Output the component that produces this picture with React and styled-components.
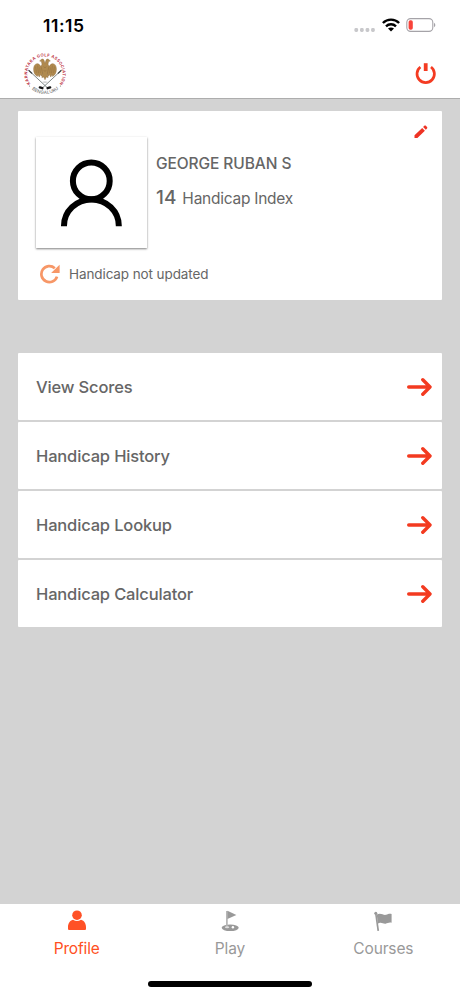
import React, { useState } from "react";
import styled, { createGlobalStyle } from "styled-components";

const GlobalStyle = createGlobalStyle`
  * { box-sizing: border-box; }
  body {
    margin: 0;
    background: #d3d3d3;
    font-family: Inter, "Liberation Sans", sans-serif;
  }
  svg { display: block; flex: none; }
`

const Screen = styled.div`
  width: 460px;
  height: 996px;
  display: flex;
  flex-direction: column;
  background: #d3d3d3;
  color: #666;
  overflow: hidden;
`

const StatusBar = styled.div`
  height: 50px;
  padding: 0 24px 0 43px;
  display: flex;
  align-items: center;
  justify-content: space-between;
  background: #fff;
`

const Clock = styled.div`
  color: #000;
  font-size: 17.5px;
  line-height: 20px;
  font-weight: 600;
  letter-spacing: 0.55px;
  padding-top: 2px;
`

const StatusIcons = styled.div`
  display: flex;
  align-items: center;
  gap: 6.5px;
`

const Header = styled.header`
  height: 49px;
  padding: 0 23px;
  display: flex;
  align-items: center;
  justify-content: space-between;
  background: #fff;
  border-bottom: 1px solid #adadad;
`

const IconButton = styled.button`
  display: flex;
  padding: 0;
  border: 0;
  background: none;
  cursor: pointer;
`

const Content = styled.main`
  flex: 1;
  padding: 12px 18px 0;
`

const ProfileCard = styled.section`
  height: 189px;
  padding: 26px 14px 0 18px;
  display: grid;
  grid-template-columns: 111px 1fr 14px;
  grid-template-rows: 111px 52px;
  column-gap: 9px;
  background: #fff;
  border-radius: 1px;
`

const Avatar = styled.div`
  display: flex;
  align-items: center;
  justify-content: center;
  background: #fff;
  box-shadow: 0 1px 2px rgba(0, 0, 0, 0.5);
`

const Details = styled.div`
  padding-top: 16px;
`

const Name = styled.div`
  font-size: 15.5px;
  line-height: 22px;
  font-weight: 500;
  letter-spacing: -0.08px;
`

const Handicap = styled.div`
  margin-top: 11px;
  display: flex;
  align-items: baseline;
  gap: 6px;
  font-size: 15.5px;
  line-height: 24px;
  letter-spacing: -0.25px;
`

const HandicapValue = styled.span`
  font-size: 19px;
  font-weight: 500;
  letter-spacing: 0;
`

const EditButton = styled(IconButton)`
  margin-top: -12px;
  align-self: start;
`

const UpdateNote = styled.div`
  grid-column: 1 / -1;
  display: flex;
  align-items: center;
  gap: 9px;
  padding-left: 3px;
  font-size: 13.5px;
  letter-spacing: -0.1px;
`

const Menu = styled.nav`
  margin-top: 53px;
  display: flex;
  flex-direction: column;
  gap: 2px;
`

const MenuRow = styled.a`
  height: 67px;
  padding: 0 10px 0 18px;
  display: flex;
  align-items: center;
  justify-content: space-between;
  background: #fff;
  border-radius: 1px;
  font-size: 16.5px;
  font-weight: 500;
  letter-spacing: -0.16px;
  cursor: pointer;
`

const TabBar = styled.nav`
  height: 92px;
  display: flex;
  flex-direction: column;
  align-items: center;
  justify-content: space-between;
  padding-bottom: 9px;
  background: #fff;
`

const Tabs = styled.div`
  width: 100%;
  display: grid;
  grid-template-columns: repeat(3, 1fr);
`

const Tab = styled.button`
  display: flex;
  flex-direction: column;
  align-items: center;
  gap: 6px;
  padding: 6px 0 0;
  border: 0;
  background: none;
  font: 400 15.5px/22px Inter, "Liberation Sans", sans-serif;
  letter-spacing: -0.15px;
  color: ${({ $active }) => ($active ? "#ff4f22" : "#999")};
  cursor: pointer;
`

const HomeIndicator = styled.div`
  width: 164px;
  height: 6px;
  border-radius: 3px;
  background: #000;
`

const SignalIcon = () => (
  <svg width="21" height="18" viewBox="0 0 21 18" fill="#c8c8cb">
    {[0.4, 6, 11.6, 17.1].map((x) => (
      <rect key={x} x={x} y="12" width="3.7" height="4" rx="1.4" />
    ))}
  </svg>
)

const WifiIcon = () => (
  <svg width="18" height="14" viewBox="0 0 18 14" fill="none" stroke="#000" strokeWidth="2.4">
    <path d="M.9 5C5.4 .5 12.6 .5 17.1 5" />
    <path d="M4 8.3c2.8-2.7 7.2-2.7 10 0" />
    <path d="M6 10.6c1.7-1.5 4.3-1.5 6 0L9 13.6z" fill="#000" stroke="none" />
  </svg>
)

const BatteryIcon = () => (
  <svg width="30" height="14" viewBox="0 0 30 14">
    <rect x=".8" y=".6" width="26" height="12.8" rx="3.8" fill="none" stroke="#a5a3a8" strokeWidth="1.1" />
    <rect x="2.6" y="2.3" width="4.2" height="9.4" rx="1.8" fill="#f8433a" />
    <path d="M28 4.8c1.8.7 1.8 3.7 0 4.4z" fill="#a5a3a8" />
  </svg>
)

const ClubLogo = () => (
  <svg width="44" height="44" viewBox="0 0 44 44">
    <defs>
      <path id="ringTop" d="M7.8 32.4A17.6 17.6 0 1 1 36.2 32.4" />
      <path id="ringBottom" d="M6.7 35.1A20.2 20.2 0 0 0 37.3 35.1" />
    </defs>
    <text fontSize="4.1" fontWeight="700" fill="#c0394b">
      <textPath href="#ringTop" startOffset="0.5" textLength="76">KARNATAKA GOLF ASSOCIATION</textPath>
    </text>
    <text fontSize="4.5" fontWeight="500" fill="#737373">
      <textPath href="#ringBottom" startOffset="3" textLength="29">BENGALURU</textPath>
    </text>
    <circle cx="6.5" cy="34" r=".6" fill="#777" />
    <circle cx="37.5" cy="34" r=".6" fill="#777" />
    <g fill="none" strokeLinecap="round">
      <path d="M6.2 18.8 24.2 35.6" stroke="#707b78" strokeWidth=".9" />
      <path d="M37.8 18.8 19.8 35.6" stroke="#707b78" strokeWidth=".9" />
      <path d="M5.9 18.5 8.8 21.2M38.1 18.5l-2.9 2.7" stroke="#41464a" strokeWidth="1.2" />
      <path d="M19.4 36.2l-2.6-.8M24.6 36.2l2.6-.8" stroke="#151515" strokeWidth="2.3" />
    </g>
    {/* wings, then body with the two heads */}
    <g fill="#b08a4e" stroke="#8a6838" strokeWidth=".4">
      <path d="M19.5 15.4c-2-.3-2.3-3.2-4.6-3.7-2.6-.5-4.2 2-4.3 5.2-.1 3.6 1.4 6.4 3.8 7.5l.6-1.9 1.2 2.6 1.3-2.5 1 1.6 1.4-2.6z" />
      <path d="M24.5 15.4c2-.3 2.3-3.2 4.6-3.7 2.6-.5 4.2 2 4.3 5.2.1 3.6-1.4 6.4-3.8 7.5l-.6-1.9-1.2 2.6-1.3-2.5-1 1.6-1.4-2.6z" />
      <path d="M22 11.2l1-3c.5-1.5 2.6-1.6 3.1-.2l1.3.9-1.8.7-.6 2.6 1 2.1-1.6 6.7.7 4.6-1.9-.5L22 27.8l-1.2-2.7-1.9.5.7-4.6-1.6-6.7 1-2.1-.6-2.6-1.8-.7 1.3-.9c.5-1.4 2.6-1.3 3.1.2z" />
      <path d="M12.6 14.5l.8 6.4M14.6 13.5l.9 7.8M16.7 15.5l.6 5.6M31.4 14.5l-.8 6.4M29.4 13.5l-.9 7.8M27.3 15.5l-.6 5.6M20.7 14.5l1.3 1.5 1.3-1.5M20.7 18l1.3 1.5 1.3-1.5" fill="none" />
    </g>
    <path d="M19.8 30.2h4.4" stroke="#b5b5b5" strokeWidth="1.3" strokeDasharray=".8 .4" />
  </svg>
)

const PowerIcon = () => (
  <svg width="22" height="22" viewBox="0 0 22 22" fill="none" stroke="#f43b22" strokeLinecap="butt">
    <path d="M5.4 4A8.7 8.7 0 1 0 16 4" strokeWidth="2.7" />
    <path d="M10.7 .2v7.8" strokeWidth="3.8" />
  </svg>
)

const EditIcon = () => (
  <svg width="14" height="14" viewBox="0 0 14 14" fill="#ee3324">
    <path d="M8.2 2.9 10.9 5.7 3.4 13H.5v-2.7zM9.1 2l1.2-1.2c.5-.5 1.1-.5 1.6 0L13 2c.5.5.5 1 0 1.5l-1.2 1.2z" />
  </svg>
)

const PersonIcon = () => (
  <svg width="62" height="70" viewBox="0 0 62 70" fill="none" stroke="#000" strokeWidth="6">
    <circle cx="30.3" cy="22.9" r="18.4" />
    <path d="M3 68.2v-.5a27.4 26.3 0 0 1 54.8 0v.5" />
  </svg>
)

const RefreshIcon = () => (
  <svg width="21" height="20" viewBox="0 0 21 20">
    <path d="M15.8 4.2A8 8 0 1 0 18 12.6" fill="none" stroke="#f79767" strokeWidth="2.7" />
    <path d="M20.6.8v8.3h-8.5z" fill="#f79767" />
  </svg>
)

const ArrowIcon = () => (
  <svg width="25" height="20" viewBox="0 0 25 20" fill="none" stroke="#f33a20" strokeWidth="3.4" strokeLinecap="round" strokeLinejoin="round">
    <path d="M1.7 10h21.2M15.8 2.8l7.2 7.2-7.2 7.2" />
  </svg>
)

const ProfileTabIcon = () => (
  <svg width="20" height="22" viewBox="0 0 20 22" fill="#ff5126">
    <circle cx="10" cy="5.2" r="4.8" />
    <path d="M6 9.8q4 2.6 8 0c3.3.8 5 3.9 5 7.4v1.7q0 1.1-1.1 1.1H2.1Q1 20 1 18.9v-1.7c0-3.5 1.7-6.6 5-7.4z" />
  </svg>
)

const PlayTabIcon = () => (
  <svg width="20" height="22" viewBox="0 0 20 22">
    <ellipse cx="10.2" cy="17.8" rx="8.5" ry="3.3" fill="#999" />
    <path d="M6.9 1v16" stroke="#b4b4b4" strokeWidth="1.7" />
    <path d="M7.4.7 16.4 5 7.4 9z" fill="#999" />
    <ellipse cx="7.1" cy="17.3" rx="2.2" ry="1" fill="#ddd" />
    <circle cx="12.9" cy="17.2" r="1.2" fill="#fff" />
  </svg>
)

const CoursesTabIcon = () => (
  <svg width="20" height="22" viewBox="0 0 20 22" fill="#999">
    <circle cx="2.8" cy="3.2" r="1.5" />
    <path d="M2 3.5h1.6l2.5 17.2-1.7.3z" />
    <path d="M3.8 4.6c4-2.4 6.4 1 9.2.2 2-.6 3.5-1.4 5.6-.8v8.8c-2.5-.8-4 .6-6 .9-2.8.4-4.4-2.5-7.8.1z" />
  </svg>
)

const menuItems = ["View Scores", "Handicap History", "Handicap Lookup", "Handicap Calculator"];

const tabs = [
  { label: "Profile", Icon: ProfileTabIcon },
  { label: "Play", Icon: PlayTabIcon },
  { label: "Courses", Icon: CoursesTabIcon },
];

function App() {
  const [activeTab, setActiveTab] = useState("Profile");

  return (
    <>
      <GlobalStyle />
      <Screen>
        <StatusBar>
          <Clock>11:15</Clock>
          <StatusIcons>
            <SignalIcon />
            <WifiIcon />
            <BatteryIcon />
          </StatusIcons>
        </StatusBar>
        <Header>
          <ClubLogo />
          <IconButton><PowerIcon /></IconButton>
        </Header>
        <Content>
          <ProfileCard>
            <Avatar><PersonIcon /></Avatar>
            <Details>
              <Name>GEORGE RUBAN S</Name>
              <Handicap>
                <HandicapValue>14</HandicapValue>
                Handicap Index
              </Handicap>
            </Details>
            <EditButton><EditIcon /></EditButton>
            <UpdateNote>
              <RefreshIcon />
              Handicap not updated
            </UpdateNote>
          </ProfileCard>
          <Menu>
            {menuItems.map((item) => (
              <MenuRow key={item}>
                {item}
                <ArrowIcon />
              </MenuRow>
            ))}
          </Menu>
        </Content>
        <TabBar>
          <Tabs>
            {tabs.map(({ label, Icon }) => (
              <Tab key={label} $active={activeTab === label} onClick={() => setActiveTab(label)}>
                <Icon />
                {label}
              </Tab>
            ))}
          </Tabs>
          <HomeIndicator />
        </TabBar>
      </Screen>
    </>
  );
}

export default App;
